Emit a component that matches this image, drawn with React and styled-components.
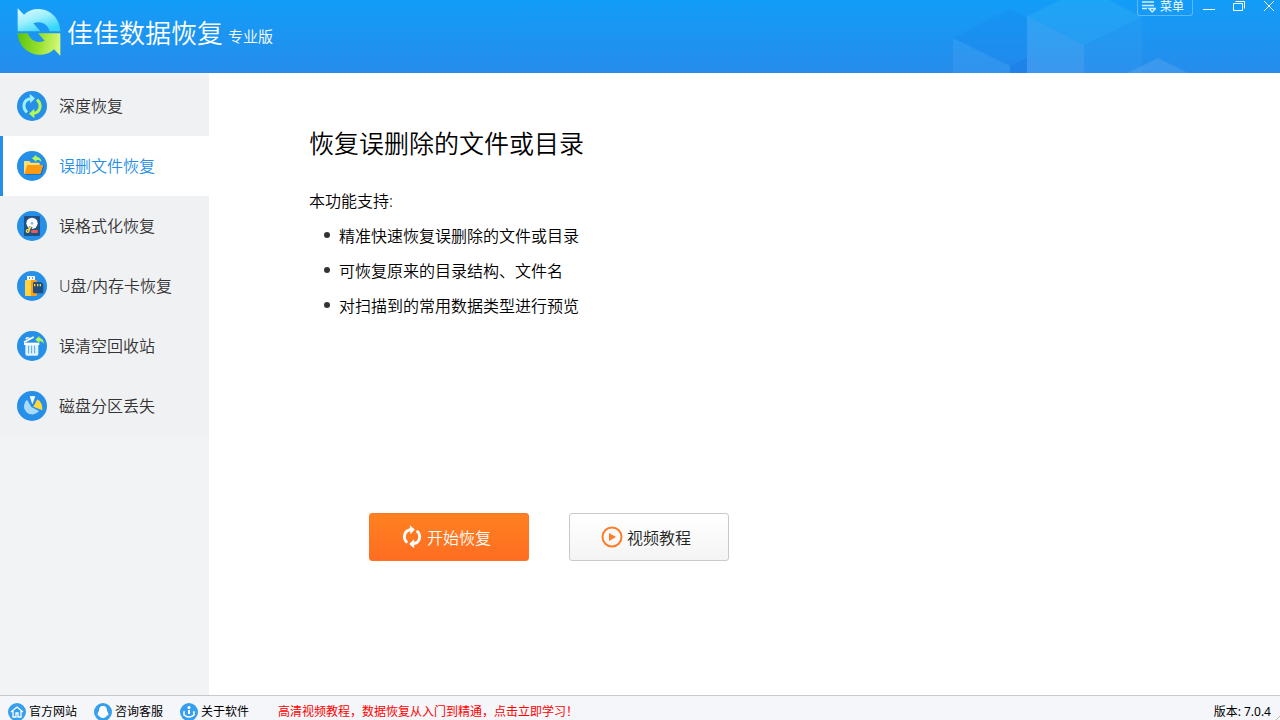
import React from "react";
import styled, { createGlobalStyle } from "styled-components";

const GlobalStyle = createGlobalStyle`
  *, *::before, *::after { box-sizing: border-box; }
  body {
    margin: 0;
    font-family: "Noto Sans", "Noto Sans CJK SC", sans-serif;
    font-size: 16px;
    font-weight: 350;
    color: #000;
    background: #fff;
  }
  h1, h2, p, ul { margin: 0; padding: 0; font-weight: inherit; }
  button { font: inherit; margin: 0; padding: 0; border: 0; background: none; cursor: pointer; }
  a { color: inherit; text-decoration: none; }
  svg { display: block; flex: none; }
`;

const Window = styled.div`
  display: flex;
  flex-direction: column;
  min-height: 100vh;
`;

const Header = styled.header`
  position: relative;
  display: flex;
  justify-content: space-between;
  align-items: flex-start;
  height: 73px;
  flex: none;
  overflow: hidden;
  color: #fff;
  background: linear-gradient(#129df8, #268ceb);
`;

const Cubes = styled.svg`
  position: absolute;
  top: 0;
  right: 91px;
`;

const Brand = styled.div`
  display: flex;
  align-items: center;
  height: 64px;
  padding-left: 17px;
`;

const BrandName = styled.h1`
  margin-left: 6px;
  font-family: "Noto Sans CJK SC", sans-serif;
  font-size: 26px;
  line-height: 32px;
`;

const Edition = styled.span`
  margin-left: 5px;
  padding-top: 8px;
  font-size: 15px;
  line-height: 20px;
`;

const WindowControls = styled.div`
  position: relative;
  display: flex;
  align-items: flex-start;
  gap: 18px;
  padding-right: 5px;
`;

const MenuButton = styled.button`
  display: flex;
  align-items: flex-start;
  gap: 4px;
  width: 56px;
  height: 16px;
  margin-right: -8px;
  padding-left: 4px;
  border: 1px solid #5cb8fb;
  border-top: 0;
  border-radius: 0 0 3px 3px;
  color: #fff;
  font-family: "Liberation Sans", "Noto Sans CJK SC", sans-serif;
  font-size: 12px;
  line-height: 14px;
`;

const ControlButton = styled.button`
  display: flex;
  width: 12px;
  height: 16px;
  color: #fff;
`;

const Body = styled.div`
  display: flex;
  flex: 1;
`;

const Sidebar = styled.nav`
  width: 209px;
  flex: none;
  padding-top: 3px;
  background: #f1f3f5;
`;

const NavItem = styled.button`
  display: flex;
  align-items: center;
  gap: 12px;
  width: 100%;
  height: 60px;
  padding-left: 14px;
  border-left: 3px solid ${(p) => (p.$active ? "#268fe8" : "transparent")};
  background: ${(p) => (p.$active ? "#fff" : "#f0f1f3")};
  color: ${(p) => (p.$active ? "#268fe8" : "#333")};
  line-height: 24px;
`;

const Content = styled.main`
  flex: 1;
  padding: 51px 20px 20px 100px;
`;

const Title = styled.h2`
  font-size: 25px;
  line-height: 38px;
`;

const Intro = styled.p`
  margin-top: 27px;
  line-height: 24px;
`;

const FeatureList = styled.ul`
  list-style: none;
  padding: 4px 0 0 15px;
`;

const Feature = styled.li`
  display: flex;
  align-items: center;
  gap: 9px;
  height: 35px;

  &::before {
    content: "";
    width: 6px;
    height: 6px;
    border-radius: 50%;
    background: #333;
  }
`;

const Actions = styled.div`
  display: flex;
  gap: 40px;
  margin-top: 191px;
  padding-left: 60px;
`;

const ActionButton = styled.button`
  display: flex;
  align-items: center;
  justify-content: center;
  gap: 4px;
  width: 160px;
  height: 48px;
  padding-right: 6px;
  border: 1px solid ${(p) => (p.$primary ? "#ff7322" : "#c8c9cb")};
  border-radius: 3px;
  color: ${(p) => (p.$primary ? "#fff" : "#222")};
  background: ${(p) =>
    p.$primary
      ? "linear-gradient(#ff8120, #ff6d22)"
      : "linear-gradient(#fff, #f4f4f4)"};
`;

const Footer = styled.footer`
  position: relative;
  display: flex;
  align-items: center;
  height: 25px;
  flex: none;
  overflow: hidden;
  padding: 8px 9px 0 8px;
  border-top: 1px solid #c8c9cb;
  background: #f5f6f9;
  font-size: 12px;
  font-weight: 400;
  line-height: 18px;
`;

const FooterLinks = styled.div`
  display: flex;
  gap: 17px;
`;

const FooterLink = styled.a`
  display: flex;
  align-items: center;
  gap: 3px;
`;

const Promo = styled.a`
  && { color: #f00; }
  margin-left: 29px;
`;

const Version = styled.span`
  margin-left: auto;
`;

const Grip = styled.svg`
  position: absolute;
  right: 0;
  bottom: 0;
`;

function Logo() {
  return (
    <svg width="44" height="48" viewBox="20 23 132 144" aria-hidden="true">
      <defs>
        <linearGradient id="aqua" x1="0" y1="0" x2="0.6" y2="1">
          <stop offset="0" stopColor="#e2fbff" />
          <stop offset="0.5" stopColor="#9ff0ff" />
          <stop offset="1" stopColor="#35d5fa" />
        </linearGradient>
        <linearGradient id="lime" x1="0" y1="0.4" x2="1" y2="0.5">
          <stop offset="0" stopColor="#5cc410" />
          <stop offset="0.5" stopColor="#96e02c" />
          <stop offset="1" stopColor="#d8f97c" />
        </linearGradient>
      </defs>
      <path d="M22 24 L41 43 C54 29 75 24 93 27 C124 31 149 58 150 93 H118 C112 72 94 60 69 69 L90 93 H22 Z" fill="url(#aqua)" />
      <path d="M150 166 L131 147 C118 161 97 165 80 163 C49 159 23 134 22 99 H53 C59 121 80 131 103 121 L83 99 H150 Z" fill="url(#lime)" />
    </svg>
  );
}

function HeaderCubes() {
  return (
    <Cubes width="236" height="73" viewBox="953 0 236 73" aria-hidden="true">
      <path d="M953 38 L1010 9 L1027 17 V58 L1010 66 Z" fill="#167ff0" fillOpacity="0.2" />
      <path d="M953 38 L1010 66 V73 H953 Z" fill="#fff" fillOpacity="0.06" />
      <path d="M1010 66 L1027 58 V73 H1010 Z" fill="#1b7ce8" fillOpacity="0.6" />
      <path d="M1027 16 L1061 0 H1109 L1142 17 L1084 45 Z" fill="#5bd0f5" fillOpacity="0.17" />
      <path d="M1027 16 L1084 45 V73 H1027 Z" fill="#fff" fillOpacity="0.1" />
      <path d="M1084 45 L1142 17 V73 H1084 Z" fill="#5bb8f5" fillOpacity="0.12" />
      <path d="M1128 73 L1158 58 L1188 73 Z" fill="#fff" fillOpacity="0.1" />
    </Cubes>
  );
}

function Badge({ children }) {
  return (
    <svg width="30" height="30" viewBox="0 0 90 90" aria-hidden="true">
      <circle cx="45" cy="45" r="45" fill="#268fe8" />
      {children}
    </svg>
  );
}

function CycleArrows({ left, right }) {
  return (
    <>
      <path d="M30 64 C14 49 20 26 40 23" fill="none" stroke={left} strokeWidth="9" />
      <path d="M38 9 L54 22 L40 37 Z" fill={left} />
      <path d="M60 26 C76 41 70 64 50 67" fill="none" stroke={right} strokeWidth="9" />
      <path d="M52 53 L36 68 L52 82 Z" fill={right} />
    </>
  );
}

const DeepIcon = () => (
  <Badge>
    <CycleArrows left="#9df1ff" right="#b4fa55" />
  </Badge>
);

const FolderIcon = () => (
  <Badge>
    <path d="M25 70 H70 L78 46 V43 L81 45 L73 72 H28 Z" fill="#1767ae" />
    <path d="M21 66 V32 Q21 30 23 30 H37 Q39 30 41 35 H66 Q68 35 68 37 V44 H32 L23 69 Z" fill="#ffdf70" />
    <path d="M31 42 H77 Q79 42 78 45 L71 67 Q70 69 68 69 H24 Q22 69 23 66 Z" fill="#ff9b13" />
    <path d="M45 22 L58 11 V17 C68 18 73 24 73 33 C69 28 65 27 58 27 V33 Z" fill="#b4fa55" />
  </Badge>
);

const DiskIcon = () => (
  <Badge>
    <rect x="21" y="15" width="48" height="60" rx="3" fill="#1f5283" />
    <circle cx="45" cy="37" r="17" fill="#fff" />
    <circle cx="45" cy="37" r="4" fill="#8bbad8" />
    <path d="M42 47 L35 61" stroke="#1f5283" strokeWidth="10" />
    <path d="M40 49 L33 60" stroke="#ffe04c" strokeWidth="6" strokeLinecap="round" />
    <circle cx="32" cy="60" r="6" fill="#ffe04c" />
    <circle cx="32" cy="60" r="2" fill="#1f5283" />
    <rect x="42" y="57" width="21" height="9" rx="4" fill="#f05858" />
  </Badge>
);

const UsbIcon = () => (
  <Badge>
    <rect x="30" y="15" width="24" height="14" fill="#f2f6fa" />
    <path d="M36 18 H39 V24 H36 Z M45 18 H48 V24 H45 Z" fill="#8796a5" />
    <rect x="24" y="27" width="36" height="48" rx="4" fill="#ff9d15" />
    <path d="M28 27 H42 V75 H28 Q24 75 24 71 V31 Q24 27 28 27 Z" fill="#ffd342" />
    <path d="M52 33 H72 L79 40 V63 Q79 67 75 67 H52 Q48 67 48 63 V37 Q48 33 52 33 Z" fill="#1f4f80" />
    <path d="M51 39 H55 V46 H51 Z M60 39 H64 V46 H60 Z M68 39 H72 V46 H68 Z" fill="#ffd342" />
  </Badge>
);

const TrashIcon = () => (
  <Badge>
    <path d="M21 35 H67 V42 H21 Z" fill="#fff" />
    <path d="M25 41 H64 V69 Q64 74 59 74 H30 Q25 74 25 69 Z" fill="#dff4fd" />
    <path d="M35 44 V67 M44 44 V67 M53 44 V67" stroke="#4fa4dc" strokeWidth="3" />
    <path d="M21 34 L50 18" stroke="#fff" strokeWidth="5" />
    <path d="M26 25 L30 20 L38 22" fill="none" stroke="#fff" strokeWidth="4" />
    <path d="M55 26 L67 15 V20 C75 22 80 27 80 38 C76 32 72 30 67 30 V36 Z" fill="#b4fa55" />
  </Badge>
);

const PieIcon = () => (
  <Badge>
    <path d="M43 48 L30 26 A25 25 0 1 0 66 60 Z" fill="#a9dafa" />
    <path d="M38 16 Q46 14 55 16 L46 40 Z" fill="#f4fbff" />
    <path d="M49 47 L61 25 Q77 34 76 58 Z" fill="#ffd83d" />
  </Badge>
);

function FooterBadge({ children }) {
  return (
    <svg width="18" height="18" viewBox="0 0 18 18" aria-hidden="true">
      <circle cx="9" cy="9" r="9" fill="#369fee" />
      {children}
    </svg>
  );
}

const HomeIcon = () => (
  <FooterBadge>
    <path d="M3 9 L9 4 L15 9 M5 8 V14 H8 V10 H10 V14 H13 V8" fill="none" stroke="#fff" strokeWidth="1.3" />
  </FooterBadge>
);

const ServiceIcon = () => (
  <FooterBadge>
    <path d="M9 3 C6 3 5 5 5 8 C4 9 3 11 4 13 L5 12 C5 13 6 14 6 14 Q9 16 12 14 L13 12 L14 13 C15 11 14 9 13 8 C13 5 12 3 9 3 Z" fill="#fff" />
  </FooterBadge>
);

const AboutIcon = () => (
  <FooterBadge>
    <circle cx="9" cy="4.5" r="1.5" fill="#fff" />
    <path d="M9 7 V11" stroke="#fff" strokeWidth="2" />
    <path d="M5 9 H4 V12 Q9 16 14 12 V9 H13" fill="none" stroke="#fff" strokeWidth="1.5" />
  </FooterBadge>
);

const navItems = [
  { label: "深度恢复", Icon: DeepIcon },
  { label: "误删文件恢复", Icon: FolderIcon, active: true },
  { label: "误格式化恢复", Icon: DiskIcon },
  { label: "U盘/内存卡恢复", Icon: UsbIcon },
  { label: "误清空回收站", Icon: TrashIcon },
  { label: "磁盘分区丢失", Icon: PieIcon },
];

const features = [
  "精准快速恢复误删除的文件或目录",
  "可恢复原来的目录结构、文件名",
  "对扫描到的常用数据类型进行预览",
];

const footerLinks = [
  { label: "官方网站", Icon: HomeIcon },
  { label: "咨询客服", Icon: ServiceIcon },
  { label: "关于软件", Icon: AboutIcon },
];

export default function App() {
  return (
    <Window>
      <GlobalStyle />
      <Header>
        <HeaderCubes />
        <Brand>
          <Logo />
          <BrandName>佳佳数据恢复</BrandName>
          <Edition>专业版</Edition>
        </Brand>
        <WindowControls>
          <MenuButton type="button">
            <svg width="14" height="14" viewBox="0 0 14 14" fill="none" stroke="#d3edff" aria-hidden="true">
              <path d="M0 2 H12 M0 5.5 H12 M0 8.5 H5" strokeWidth="1.4" />
              <path d="M7 8.5 H13.5 L10.2 12 Z" strokeWidth="1.4" />
            </svg>
            菜单
          </MenuButton>
          <ControlButton type="button" aria-label="最小化">
            <svg width="12" height="12" viewBox="0 0 12 12" stroke="currentColor">
              <path d="M0 9.5 H12" />
            </svg>
          </ControlButton>
          <ControlButton type="button" aria-label="还原">
            <svg width="12" height="12" viewBox="0 0 12 12" fill="none" stroke="currentColor">
              <path d="M0.5 3.5 H9.5 V10.5 H0.5 Z M2.5 1.5 H11.5 V8.5" />
            </svg>
          </ControlButton>
          <ControlButton type="button" aria-label="关闭">
            <svg width="12" height="12" viewBox="0 0 12 12" stroke="currentColor">
              <path d="M1 1 L11 11 M11 1 L1 11" />
            </svg>
          </ControlButton>
        </WindowControls>
      </Header>

      <Body>
        <Sidebar>
          {navItems.map(({ label, Icon, active }) => (
            <NavItem key={label} type="button" $active={active} aria-current={active ? "page" : undefined}>
              <Icon />
              {label}
            </NavItem>
          ))}
        </Sidebar>
        <Content>
          <Title>恢复误删除的文件或目录</Title>
          <Intro>本功能支持:</Intro>
          <FeatureList>
            {features.map((text) => (
              <Feature key={text}>{text}</Feature>
            ))}
          </FeatureList>
          <Actions>
            <ActionButton type="button" $primary>
              <svg width="22" height="24" viewBox="12 8 66 76" aria-hidden="true">
                <CycleArrows left="#fff" right="#fff" />
              </svg>
              开始恢复
            </ActionButton>
            <ActionButton type="button">
              <svg width="22" height="22" viewBox="0 0 22 22" aria-hidden="true">
                <circle cx="11" cy="11" r="9.5" fill="none" stroke="#fd7c28" strokeWidth="2" />
                <path d="M8 7 L15 11 L8 15 Z" fill="#fd7c28" />
              </svg>
              视频教程
            </ActionButton>
          </Actions>
        </Content>
      </Body>

      <Footer>
        <FooterLinks>
          {footerLinks.map(({ label, Icon }) => (
            <FooterLink key={label} href="#">
              <Icon />
              {label}
            </FooterLink>
          ))}
        </FooterLinks>
        <Promo href="#">高清视频教程，数据恢复从入门到精通，点击立即学习！</Promo>
        <Version>版本: 7.0.4</Version>
        <Grip width="4" height="4" viewBox="0 0 4 4" stroke="#b8b8b8" aria-hidden="true">
          <path d="M0 4 L4 0" />
        </Grip>
      </Footer>
    </Window>
  );
}
